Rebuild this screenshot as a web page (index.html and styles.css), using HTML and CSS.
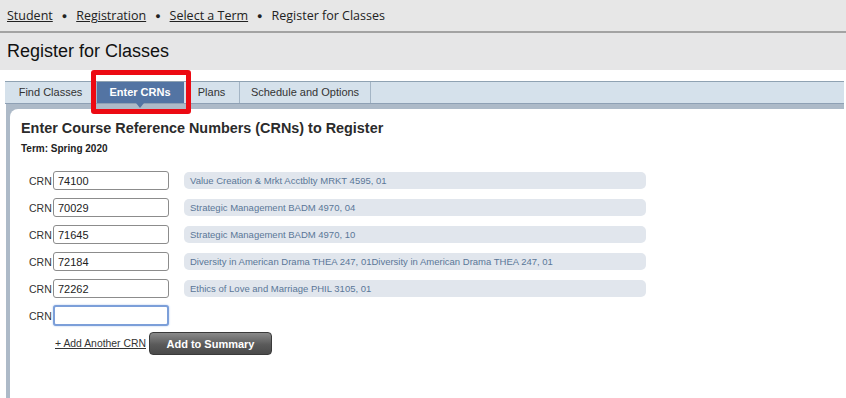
FILE: index.html
```html
<!DOCTYPE html>
<html lang="en">
<head>
<meta charset="UTF-8"/>
<title>Register for Classes</title>
<link rel="stylesheet" href="styles.css">
</head>
<body>
<div class="crumbs">
  <a href="#">Student</a><span class="dot">&#9679;</span>
  <a href="#">Registration</a><span class="dot">&#9679;</span>
  <a href="#">Select a Term</a><span class="dot">&#9679;</span>
  <span>Register for Classes</span>
</div>
<div class="title-bar"><h1>Register for Classes</h1></div>

<div class="tabs-wrap">
  <div class="tabs">
    <div class="tab">Find Classes</div>
    <div class="tab active">Enter CRNs</div>
    <div class="tab">Plans</div>
    <div class="tab">Schedule and Options</div>
  </div>
  <div class="mark"></div>
  <div class="panel-wrap">
    <div class="panel">
      <h2>Enter Course Reference Numbers (CRNs) to Register</h2>
      <p class="term">Term: Spring 2020</p>
      <div class="rows">
        <div class="row"><label>CRN</label><input type="text" value="74100"/><span class="desc">Value Creation &amp; Mrkt Acctblty MRKT 4595, 01</span></div>
        <div class="row"><label>CRN</label><input type="text" value="70029"/><span class="desc">Strategic Management BADM 4970, 04</span></div>
        <div class="row"><label>CRN</label><input type="text" value="71645"/><span class="desc">Strategic Management BADM 4970, 10</span></div>
        <div class="row"><label>CRN</label><input type="text" value="72184"/><span class="desc">Diversity in American Drama THEA 247, 01Diversity in American Drama THEA 247, 01</span></div>
        <div class="row"><label>CRN</label><input type="text" value="72262"/><span class="desc">Ethics of Love and Marriage PHIL 3105, 01</span></div>
        <div class="row"><label>CRN</label><input type="text" class="focus" value=""/></div>
      </div>
      <div class="actions">
        <a href="#" class="add">+ Add Another CRN</a>
        <button class="btn">Add to Summary</button>
      </div>
    </div>
  </div>
</div>
</body>
</html>
```

FILE: styles.css
```css
*{box-sizing:border-box}
body{margin:0;font-family:'Liberation Sans',Arial,sans-serif;color:#333;background:#fff;height:398px;overflow:hidden}
.crumbs{height:31px;background:#e7e7e7;padding-left:7px;display:flex;align-items:center;font-family:'Open Sans',sans-serif;font-size:12.5px;color:#222}
.crumbs a{color:#222;text-decoration:underline}
.crumbs .dot{font-size:9px;margin:0 9px}
.title-bar{height:39px;background:#e6e6e7;border-top:2px solid #a3a3a3;padding-left:7px}
.title-bar h1{margin:0;font-size:18px;font-weight:normal;color:#111;line-height:37px}
.tabs-wrap{position:relative;margin-top:11px;padding:0 2px 0 5px}
.tabs{display:flex;height:23px;background:#d5e1eb;border-top:1px solid #8fa2b2;border-bottom:1px solid #8ea0b4}
.tab{font-size:11px;color:#333;line-height:21px;border-right:1px solid #a4b5c5;text-align:center}
.tab:nth-child(1){width:92px}
.tab:nth-child(2){width:87px}
.tab:nth-child(3){width:56px}
.tab:nth-child(4){width:131px}
.tab.active{background:#5374a3;color:#fff;font-weight:bold;position:relative;border-right-color:#5374a3}
.tab.active:after{content:'';position:absolute;left:50%;bottom:-5px;margin-left:-4px;border-left:4px solid transparent;border-right:4px solid transparent;border-top:5px solid #5374a3}
.mark{position:absolute;left:91px;top:-11px;width:100px;height:44px;border:5px solid #ec0a13;border-radius:3px}
.panel-wrap{background:#adbac8;margin-left:1px;padding:5px 0 0 4px;height:300px}
.panel{background:#fff;height:100%;border-top-left-radius:8px;padding:11px 0 0 11px}
.panel h2{margin:0;font-size:14.4px;font-weight:bold;color:#2b2b2b;line-height:16px}
.term{margin:7px 0 0;font-size:10px;font-weight:bold;color:#222}
.rows{margin-top:13px;padding-left:8px}
.row{display:flex;align-items:center;height:27px}
.row label{font-size:10.5px;color:#333;width:24px;padding-right:4px;text-align:right}
.row input{width:116px;height:19px;border:1px solid #8c8c8c;border-radius:3px;padding:0 4px;font-family:'Liberation Sans',Arial,sans-serif;font-size:11px;color:#222;outline:none}
.row input.focus{height:21px;border:2px solid #7c9fd9;box-shadow:0 0 2px #a8c2ec}
.desc{margin-left:15px;width:462px;height:17px;line-height:17px;background:#e1e6ed;border-radius:5px;padding-left:6px;font-size:9.5px;color:#5a7798}
.actions{display:flex;align-items:center;margin:3px 0 0 34px}
.add{font-size:10.4px;color:#333;text-decoration:underline}
.btn{margin-left:3px;width:123px;height:23px;border:1px solid #3a3a3a;border-radius:4px;background:linear-gradient(#8a8a8a,#5a5a5a 55%,#4a4a4a);color:#fff;font-weight:bold;font-size:11px;font-family:'Liberation Sans',Arial,sans-serif}
```
